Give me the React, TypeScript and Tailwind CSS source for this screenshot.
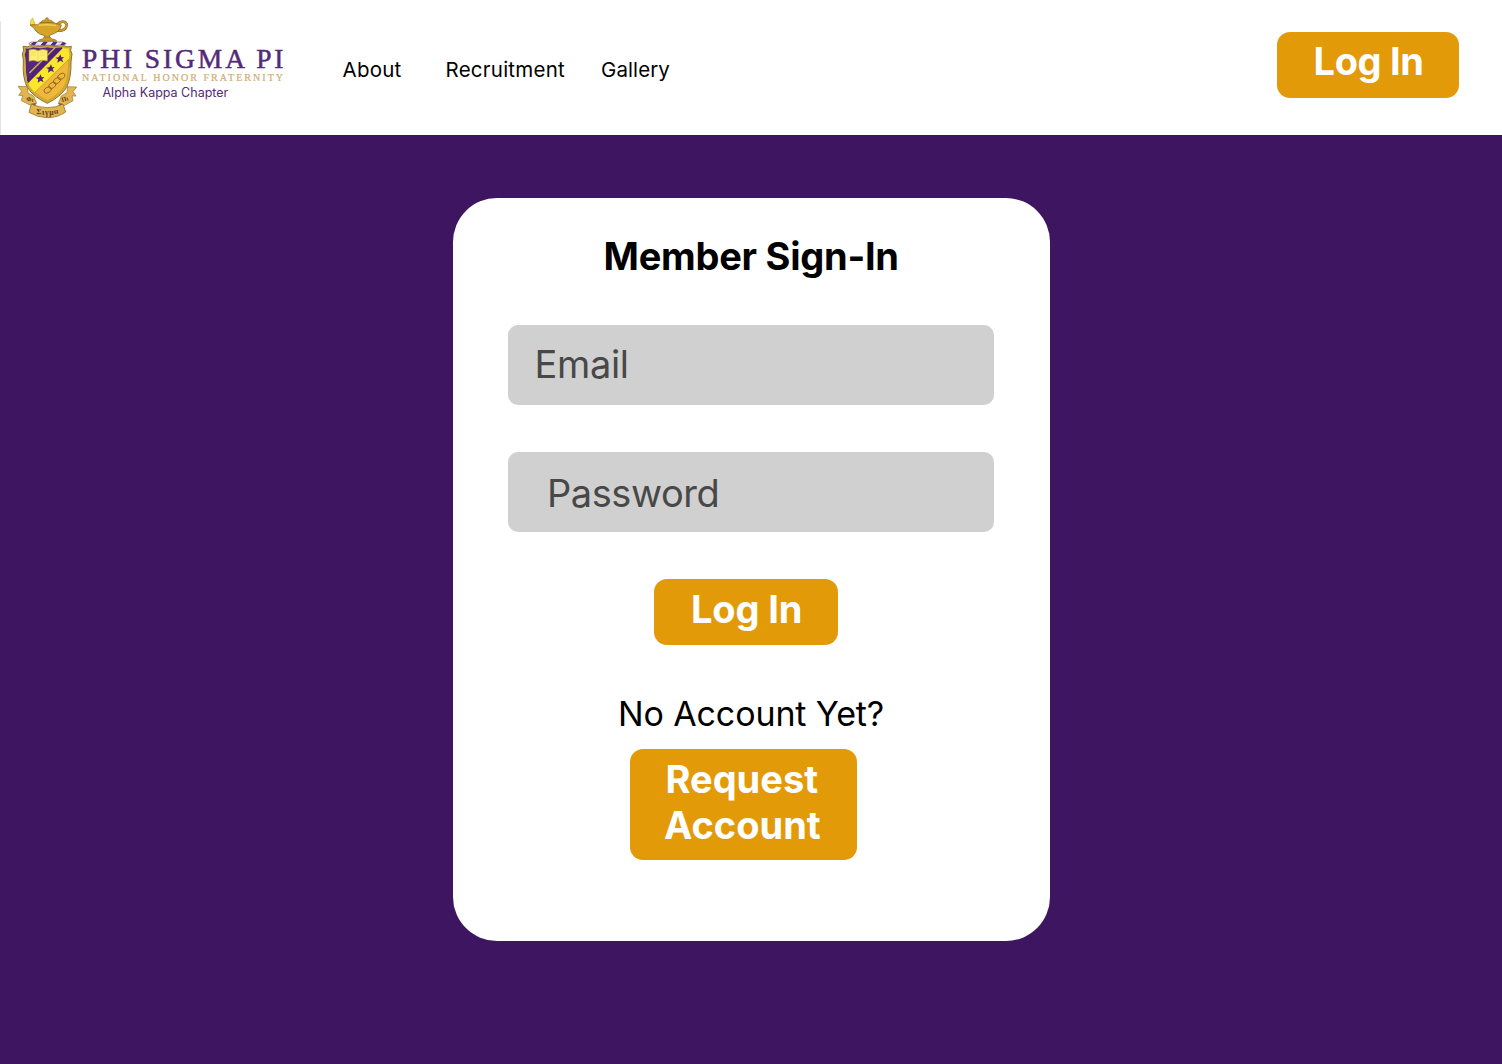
import React from "react";

function Crest() {
  return (
    <svg className="block h-[135px] w-[80px] shrink-0" viewBox="0 0 240 405" fill="none" aria-hidden="true">
      <path d="M1 63V405" stroke="#dedede" strokeWidth="3" />
      {/* lamp */}
      <path d="M92 75C89 66 92 60 98 53C98 61 107 65 105 75Z" fill="#f9dc35" stroke="#c99a27" strokeWidth="1.5" />
      <path d="M120 69Q124 61 136 59Q137 53 141 53Q145 53 146 59Q158 61 163 69Z" fill="#c9982a" stroke="#8c6a20" strokeWidth="2" />
      <path d="M170 76Q182 62 194 66Q204 72 197 84Q189 93 175 92" stroke="#8c6a20" strokeWidth="8" strokeLinecap="round" />
      <path d="M170 76Q182 62 194 66Q204 72 197 84Q189 93 175 92" stroke="#cf9f2d" strokeWidth="5" strokeLinecap="round" />
      <path d="M90 75L106 74Q114 77 119 69Q141 65 164 69L184 75Q181 93 163 100Q153 104 148 107L148 113H134L134 107Q115 103 108 93Q102 82 90 75Z" fill="#d6a528" stroke="#8c6a20" strokeWidth="2.5" strokeLinejoin="round" />
      <path d="M116 76Q139 72 168 77" stroke="#f1cd58" strokeWidth="4" />
      <path d="M133 111H150L155 117Q168 118 171 124H113Q116 118 128 117Z" fill="#c99a27" stroke="#8c6a20" strokeWidth="2" />
      {/* torse */}
      <path d="M86 131Q91 124 105 126Q121 122 137 126Q155 122 171 126Q190 123 199 131Q194 138 180 135Q161 140 143 135Q120 140 105 135Q94 138 86 131Z" fill="#eee6f3" stroke="#77618f" strokeWidth="2" />
      <path d="M91 133L101 126L112 127L103 136ZM121 136L131 125L143 126L134 137ZM151 136L160 125L172 127L164 137ZM181 135L188 126L198 130L192 135Z" fill="#552878" />
      {/* shield */}
      <path d="M69 139Q83 143 93 137Q119 142 142 137Q169 142 191 137Q201 143 214 139Q209 151 216 162Q214 174 213 186Q214 233 200 262Q181 291 142 310Q101 291 82 262Q67 233 70 186Q70 174 67 162Q74 151 69 139Z" fill="#d2ad35" stroke="#8f7129" strokeWidth="3" />
      <path d="M76 145Q91 147 99 142Q121 147 142 142Q166 147 186 142Q195 147 207 145Q204 155 209 164Q206 174 206 187Q207 231 194 257Q178 284 142 302Q105 284 88 257Q74 231 77 187Q77 173 74 164Q80 155 76 145Z" fill="#fae62c" />
      <path d="M76 145Q91 147 99 142Q121 147 142 142Q155 145 171 144L82 244Q76 214 77 187Q77 173 74 164Q80 155 76 145Z" fill="#55287c" />
      <path d="M166 144L186 142L188 145L84 250L81 238Z" fill="#4e2375" />
      <path d="M165 143L88 219" stroke="#d8b548" strokeWidth="4" />
      <path d="M206 178Q207 231 194 257Q178 284 142 302Q120 291 105 277Z" fill="#efb83b" stroke="#a98028" strokeWidth="1.5" />
      <path d="M87 150Q101 145 114 152Q127 145 142 151V183Q127 178 114 185Q99 178 87 184Z" fill="#ffef70" stroke="#b99638" strokeWidth="2" />
      <path d="M114 152V185M92 157H108M92 165H108M120 157H136M120 165H136" stroke="#dfc458" strokeWidth="1.5" />
      {[
        "translate(179 176)",
        "translate(151 206)",
        "translate(120 236)",
      ].map((t) => (
        <path key={t} transform={t} d="M2-13L5-4L13-5L7 2L11 11L2 6L-7 12L-5 2L-13-3L-3-4Z" fill="#4d2172" />
      ))}
      <g stroke="#8b6421" strokeWidth="2.5">
        <ellipse cx="184" cy="229" rx="12" ry="8" transform="rotate(-32 184 229)" />
        <ellipse cx="171" cy="242" rx="12" ry="8" transform="rotate(-38 171 242)" />
        <ellipse cx="157" cy="256" rx="12" ry="8" transform="rotate(-38 157 256)" />
        <ellipse cx="143" cy="270" rx="12" ry="8" transform="rotate(-32 143 270)" />
      </g>
      {/* ribbon */}
      <path d="M82 260L54 259L65 274L56 286L68 287L64 302L96 318L109 308L101 288L84 279ZM202 260L230 261L219 275L228 288L216 288L219 302L189 319L176 308L184 288L201 278Z" fill="#e3b54e" stroke="#9b742d" strokeWidth="2" strokeLinejoin="round" />
      <path d="M94 312L87 337Q113 353 142 353Q173 353 197 336L189 312Q167 323 142 323Q116 323 94 312Z" fill="#e3b54e" stroke="#9b742d" strokeWidth="2.5" strokeLinejoin="round" />
      <path d="M96 312L109 310L104 317M187 312L175 310L180 317" fill="#8c6627" stroke="#8c6627" strokeWidth="2" />
      <g fill="#55391e" fontFamily="Liberation Serif, serif" fontWeight="700" fontSize="19">
        <text x="78" y="302" transform="rotate(10 78 302)">Φι</text>
        <text x="186" y="306" transform="rotate(-14 186 306)">Πι</text>
        <text x="109" y="342" fontSize="23" transform="rotate(3 109 342)">Σ</text>
        <text x="126" y="344" fontSize="23">ι</text>
        <text x="135" y="344" fontSize="23" letterSpacing="2">γμ</text>
        <text x="163" y="342" fontSize="23" transform="rotate(-8 163 342)">α</text>
      </g>
    </svg>
  );
}

export default function App() {
  return (
    <div className="flex h-[1064px] w-[1502px] flex-col overflow-hidden bg-[#3e1560] font-['Inter',sans-serif]">
      <header className="flex h-[135px] shrink-0 items-start bg-white">
        <Crest />
        <div className="flex w-[262.5px] flex-col whitespace-nowrap pt-[45px] pl-[2px]">
          <div className="h-[26px] font-['Liberation_Serif',serif] text-[27.5px] leading-[28px] tracking-[2.9px] text-[#532a78] [-webkit-text-stroke:0.5px_#532a78]">PHI SIGMA PI</div>
          <div className="h-[14px] font-['Liberation_Serif',serif] text-[10px] leading-[13px] tracking-[2.05px] text-[#d0ad72] [-webkit-text-stroke:0.2px_#d0ad72]">NATIONAL HONOR FRATERNITY</div>
          <div className="pl-[20.5px] text-[12.5px] leading-[16px] text-[#532a78]">Alpha Kappa Chapter</div>
        </div>
        <nav className="flex pt-[57px] text-[20.5px] leading-[25px] tracking-[0.25px] text-black">
          <a className="w-[103px]">About</a>
          <a className="w-[155.5px]">Recruitment</a>
          <a className="tracking-[0.1px]">Gallery</a>
        </nav>
        <button className="mt-[32px] mr-[43px] ml-auto flex h-[65.5px] w-[182px] items-start rounded-[13px] bg-[#e29a09] pt-[6px] pl-[36.5px] text-[38px] leading-[46px] font-bold tracking-[-0.35px] text-white">Log In</button>
      </header>
      <main className="flex flex-1 items-start pt-[62.5px] pl-[453px]">
        <section className="flex h-[743.5px] w-[597.4px] flex-col rounded-[44px] bg-white pl-[55px]">
          <h1 className="mt-[35.5px] pl-[95.5px] text-[38px] leading-[46px] font-bold tracking-[-0.25px] text-black">Member Sign-In</h1>
          <div className="mt-[46px] h-[80px] w-[486px] rounded-[10px] bg-[#d0d0d0] pt-[16px] pl-[26.5px] text-[38px] leading-[46px] tracking-[-0.35px] text-[#484848]">Email</div>
          <div className="mt-[47.4px] h-[80px] w-[486px] rounded-[10px] bg-[#d0d0d0] pt-[18px] pl-[39px] text-[38px] leading-[46px] tracking-[-0.45px] text-[#484848]">Password</div>
          <button className="mt-[47px] ml-[146.4px] flex h-[65.5px] w-[183.5px] items-start rounded-[13px] bg-[#e29a09] pt-[7px] pl-[36.5px] text-[38px] leading-[46px] font-bold tracking-[-0.1px] text-white">Log In</button>
          <p className="mt-[48px] pl-[110px] text-[34px] leading-[41px] tracking-[-0.12px] text-black">No Account Yet?</p>
          <button className="mt-[15.5px] ml-[122px] flex h-[110.5px] w-[227.4px] flex-col items-start rounded-[13px] bg-[#e29a09] pt-[7px] pl-[34px] text-[38px] leading-[46px] font-bold text-white">
            <span className="pl-[1.5px]">Request</span>
            <span>Account</span>
          </button>
        </section>
      </main>
    </div>
  );
}
